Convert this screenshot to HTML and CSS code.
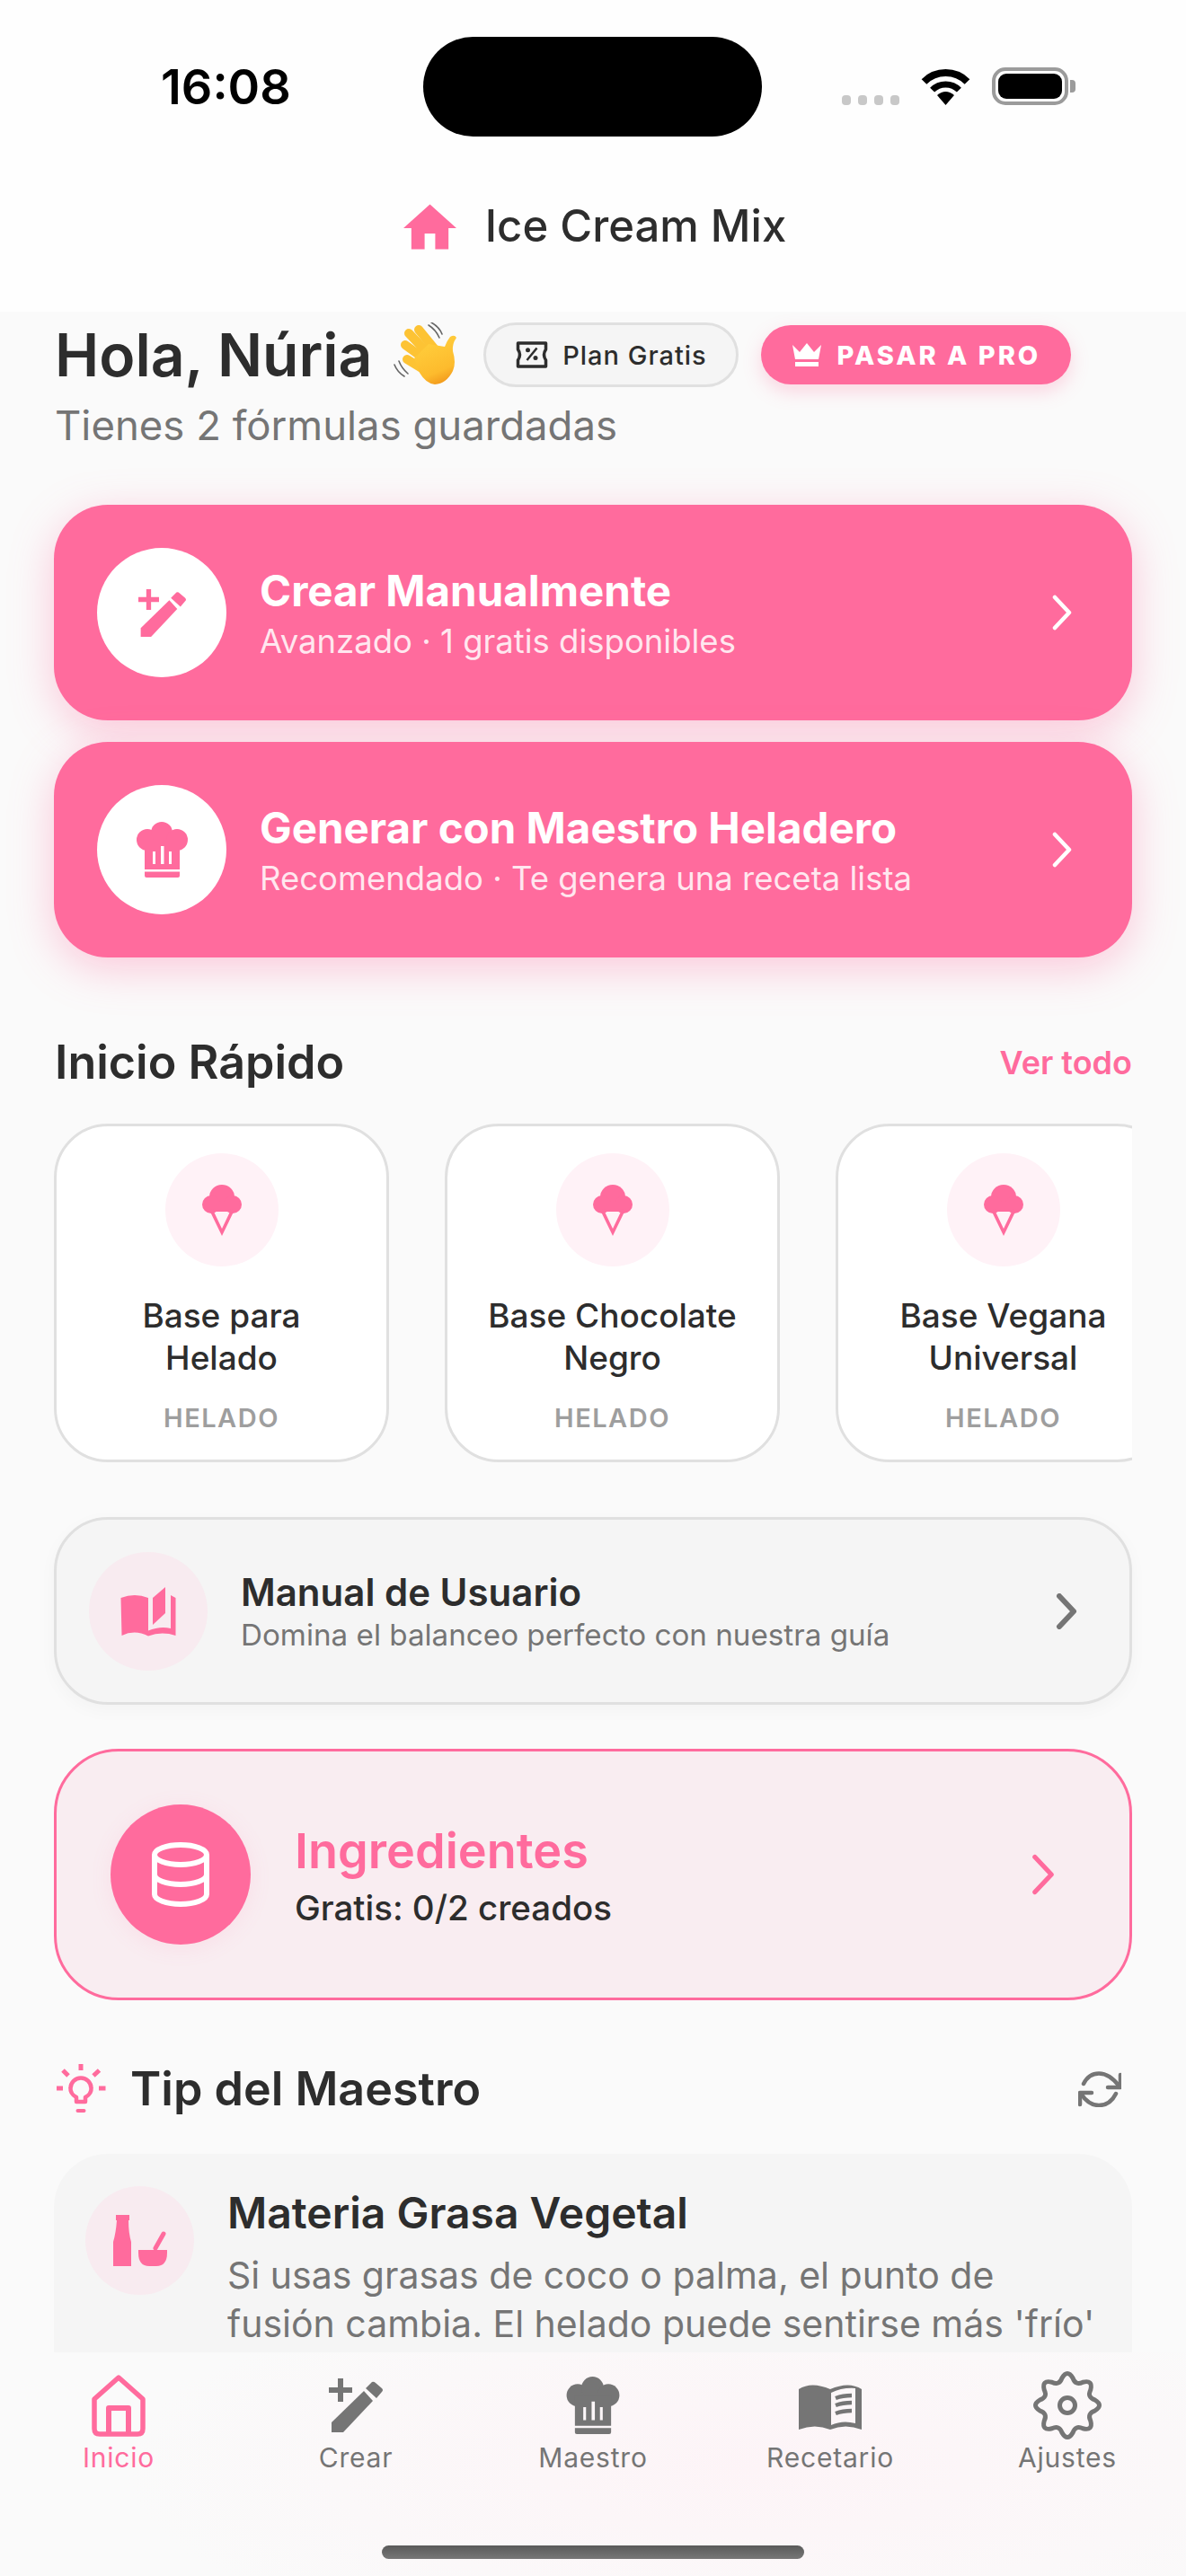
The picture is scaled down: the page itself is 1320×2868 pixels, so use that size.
FILE: index.html
```html
<!DOCTYPE html>
<html>
<head>
  <title>Ice Cream Mix</title>
  <link rel="stylesheet" href="styles.css">
</head>
<body>
  <svg class="defs" width="0" height="0">
    <defs>
      <linearGradient id="palm" x1="0.3" y1="0.2" x2="0.6" y2="1">
        <stop offset="0" stop-color="#ffcb3a"/>
        <stop offset="0.7" stop-color="#fdbb2d"/>
        <stop offset="1" stop-color="#f29a1c"/>
      </linearGradient>
    </defs>
    <symbol id="wand" viewBox="0 0 60 60">
      <path fill="currentColor" d="M10 0h6v10h10v6H16v10h-6V16H0v-6h10z"/>
      <path fill="currentColor" d="M3 49 39 14l10 11-33 35H3z"/>
      <path fill="currentColor" d="M41 11l7-7q2-1 4 1l7 6q2 2 0 4l-6 7z"/>
    </symbol>
    <symbol id="chef" viewBox="0 0 57 62">
      <circle fill="currentColor" cx="12" cy="20" r="12"/>
      <circle fill="currentColor" cx="28" cy="12" r="12"/>
      <circle fill="currentColor" cx="45" cy="20" r="12"/>
      <path fill="currentColor" fill-rule="evenodd" d="M9 20h39v33H9zM18 33v14h3V33zM27 27v20h3.500V27zM36 33v14h3V33z"/>
      <path fill="currentColor" d="M9 55.500h39V60q0 2-2 2H11q-2 0-2-2z"/>
    </symbol>
    <symbol id="cone" viewBox="0 0 44 57">
      <path fill="currentColor" fill-rule="evenodd" d="M7 26 22 57 37 26zM13 30l9 19 9-19z"/>
      <circle fill="currentColor" cx="22" cy="14" r="14"/>
      <circle fill="currentColor" cx="10" cy="22" r="10"/>
      <circle fill="currentColor" cx="34" cy="22" r="10"/>
      <path fill="currentColor" d="M10 20h24v7q-12 6-24 0z"/>
    </symbol>
    <symbol id="chevron" viewBox="0 0 24 40">
      <path fill="none" stroke="currentColor" stroke-linecap="round" stroke-linejoin="round" d="M4 3l16 17L4 37"/>
    </symbol>
  </svg>

  <div class="phone">
    <div class="top-bar">
      <div class="status-bar">
        <span class="time">16:08</span>
        <span class="island"></span>
        <div class="status-icons">
          <span class="signal"><i></i><i></i><i></i><i></i></span>
          <svg class="wifi" viewBox="0 0 59 42">
            <path fill="none" stroke="#000" stroke-width="8" d="M5.500 16A34 34 0 0 1 53.500 16"/>
            <path fill="none" stroke="#000" stroke-width="7" d="M14.600 25.100A21 21 0 0 1 44.400 25.100"/>
            <path d="M29.500 42 20 31q9.500-8 19 0z"/>
          </svg>
          <span class="battery"><span class="battery-fill"></span></span>
          <span class="battery-cap"></span>
        </div>
      </div>
      <header class="app-header">
        <svg class="logo" viewBox="2 3 20 17"><path fill="#ff6b9d" d="M10 20v-6h4v6h5v-8h3L12 3 2 12h3v8z"/></svg>
        <span class="app-title">Ice Cream Mix</span>
      </header>
    </div>

    <main class="content">
      <div class="greeting">
        <h1>Hola, Núria</h1>
        <svg class="wave" viewBox="9 10 74 72">
          <path fill="none" stroke="#666" stroke-width="1.600" stroke-linecap="round" d="M50 13q8 5 12 14M53 10q9 5 12 13M12 57q3 8 11 13M17 53q3 8 10 14"/>
          <g stroke="#fdc334" stroke-linecap="round" fill="none" stroke-width="10">
            <path d="M39 18 57 40"/>
            <path d="M28 22 49 44"/>
            <path d="M24 35 46 51"/>
            <path d="M26 51 44 62"/>
          </g>
          <path fill="url(#palm)" d="M50 34 68 37q2-6 6-11 5-3 7 1-5 7-4 15 4 13 0 22-7 14-20 15-10-1-17-13l-6-16z"/>
        </svg>
        <span class="plan-pill">
          <svg class="ticket" viewBox="13 11 35 30">
            <path fill="none" stroke="#2d2d2d" stroke-width="3.500" stroke-linejoin="round" d="M15 13H46V20Q42 26 46 32V39H15V32Q19 26 15 20Z"/>
            <path stroke="#2d2d2d" stroke-width="2.500" d="M36 18.500 25 32"/>
            <circle cx="26" cy="20.700" r="2.500" fill="#2d2d2d"/>
            <circle cx="34.500" cy="29.500" r="2.500" fill="#2d2d2d"/>
          </svg>
          Plan Gratis
        </span>
        <span class="pro-pill">
          <svg class="crown" viewBox="0 0 32 27">
            <path fill="#fff" d="M0 2l8 8 8-10 8 10 8-8-3 16H3z"/>
            <rect fill="#fff" x="3" y="21" width="26" height="5"/>
          </svg>
          PASAR A PRO
        </span>
      </div>
      <p class="saved">Tienes 2 fórmulas guardadas</p>

      <div class="action-card first">
        <span class="action-icon"><svg class="wand-icon"><use href="#wand"/></svg></span>
        <div class="action-text">
          <div class="action-title">Crear Manualmente</div>
          <div class="action-sub">Avanzado · 1 gratis disponibles</div>
        </div>
        <svg class="chevron-white"><use href="#chevron"/></svg>
      </div>
      <div class="action-card">
        <span class="action-icon"><svg class="chef-icon"><use href="#chef"/></svg></span>
        <div class="action-text">
          <div class="action-title">Generar con Maestro Heladero</div>
          <div class="action-sub">Recomendado · Te genera una receta lista</div>
        </div>
        <svg class="chevron-white"><use href="#chevron"/></svg>
      </div>

      <div class="section-head">
        <h2>Inicio Rápido</h2>
        <span class="see-all">Ver todo</span>
      </div>
      <div class="quick-row">
        <div class="quick-card">
          <span class="quick-icon"><svg class="cone-icon"><use href="#cone"/></svg></span>
          <div class="quick-title">Base para Helado</div>
          <div class="quick-tag">HELADO</div>
        </div>
        <div class="quick-card">
          <span class="quick-icon"><svg class="cone-icon"><use href="#cone"/></svg></span>
          <div class="quick-title">Base Chocolate Negro</div>
          <div class="quick-tag">HELADO</div>
        </div>
        <div class="quick-card">
          <span class="quick-icon"><svg class="cone-icon"><use href="#cone"/></svg></span>
          <div class="quick-title">Base Vegana Universal</div>
          <div class="quick-tag">HELADO</div>
        </div>
      </div>

      <div class="manual-card">
        <span class="manual-icon">
          <svg class="book-icon" viewBox="38 40 62 56">
            <path fill="#ff6b9d" d="M38.500 53Q54 47 69 53V95.500Q54 88 39.500 95Z"/>
            <path fill="#ff6b9d" d="M74 53 88 41V70L74 83Z"/>
            <path fill="#ff6b9d" d="M94 50 99.500 53V95Q84 90 69 95.500V89.500Q82 84 94 87Z"/>
          </svg>
        </span>
        <div class="manual-text">
          <div class="manual-title">Manual de Usuario</div>
          <div class="manual-sub">Domina el balanceo perfecto con nuestra guía</div>
        </div>
        <svg class="chevron-grey"><use href="#chevron"/></svg>
      </div>

      <div class="ingredients-card">
        <span class="ingredients-icon">
          <svg class="db-icon" viewBox="0 0 66 72">
            <g fill="none" stroke="#fff" stroke-width="6">
              <ellipse cx="33" cy="14" rx="29" ry="11"/>
              <path d="M4 14v44c0 6 13 11 29 11s29-5 29-11V14"/>
              <path d="M4 36c0 6 13 11 29 11s29-5 29-11"/>
            </g>
          </svg>
        </span>
        <div class="ingredients-text">
          <div class="ingredients-title">Ingredientes</div>
          <div class="ingredients-sub">Gratis: 0/2 creados</div>
        </div>
        <svg class="chevron-pink"><use href="#chevron"/></svg>
      </div>

      <div class="tip-head">
        <svg class="bulb" viewBox="12 8 56 56">
          <g fill="none" stroke="#ff6b9d">
            <path stroke-width="4.500" stroke-linejoin="round" d="M35 50V45Q28 41 28.500 35A11.500 11.500 0 1 1 51.500 35Q52 41 45 45V50Z"/>
            <path stroke-width="5" d="M40 8v7M20 15l6 6M60.500 15l-6.500 6M13 35h7M60 35h7.500"/>
            <path stroke-width="4" stroke-linecap="round" d="M36.500 60h7"/>
          </g>
        </svg>
        <h2 class="tip-heading">Tip del Maestro</h2>
        <svg class="refresh" viewBox="10 11 48 40">
          <g fill="none" stroke="#757575" stroke-width="4.500" stroke-linecap="round" stroke-linejoin="round">
            <path d="M16 25C20 17 26 13.500 33 13.500 43 13.500 50 20 56 28"/>
            <path d="M57 15V29H43"/>
            <path d="M52 36C48 44 41 49 33 49 23 49 17 42 13 36"/>
            <path d="M12 48V35H25"/>
          </g>
        </svg>
      </div>
      <div class="tip-card">
        <span class="tip-icon">
          <svg class="mortar" viewBox="0 0 60 57">
            <path fill="#ff6b9d" d="M3 0h15v6h-1q0 14 3 24v27H0V30q3-10 4-24H3z"/>
            <path fill="#ff6b9d" d="M28 39h32v3q0 15-12 15h-8q-12 0-12-15z"/>
            <path fill="none" stroke="#ff6b9d" stroke-width="5" stroke-linecap="round" d="M47 37l9-16"/>
          </svg>
        </span>
        <div class="tip-text">
          <div class="tip-title">Materia Grasa Vegetal</div>
          <p class="tip-body">Si usas grasas de coco o palma, el punto de<br>fusión cambia. El helado puede sentirse más 'frío'</p>
        </div>
      </div>
    </main>

    <nav class="tab-bar">
      <div class="tabs">
        <div class="tab active">
          <span class="tab-icon">
            <svg class="tab-home" viewBox="0 0 62 69">
              <g fill="none" stroke="currentColor" stroke-linejoin="round">
                <path stroke-width="5.500" d="M4 27 31 3l27 24v33q0 6-6 6H10q-6 0-6-6z"/>
                <path stroke-width="6" d="M20 66V37h22v29"/>
              </g>
            </svg>
          </span>
          <span class="tab-label">Inicio</span>
        </div>
        <div class="tab">
          <span class="tab-icon"><svg class="tab-wand"><use href="#wand"/></svg></span>
          <span class="tab-label">Crear</span>
        </div>
        <div class="tab">
          <span class="tab-icon"><svg class="tab-chef"><use href="#chef"/></svg></span>
          <span class="tab-label">Maestro</span>
        </div>
        <div class="tab">
          <span class="tab-icon">
            <svg class="tab-book" viewBox="0 0 70 53">
              <path fill="currentColor" fill-rule="evenodd" d="M0 8q14-9 35 0 21-9 35 0v45q-18-7-35 0-17-7-35 0zM36 12v36q13-6 27-2V7q-15-1-27 5z"/>
              <path fill="none" stroke="currentColor" stroke-width="4.500" d="M41 18q8-3 18-3M41 26q8-3 18-3M41 35q8-3 18-3"/>
            </svg>
          </span>
          <span class="tab-label">Recetario</span>
        </div>
        <div class="tab">
          <span class="tab-icon">
            <svg class="tab-gear" viewBox="0 0 80 80">
              <g fill="none" stroke="currentColor" stroke-width="5" stroke-linejoin="round">
                <path d="M33.950 9.600Q40-.6 46.050 9.600 49.030 18.200 57.220 14.220 68.700 11.300 65.780 22.780 61.800 30.970 70.400 33.950 80.600 40 70.400 46.050 61.800 49.030 65.780 57.220 68.700 68.700 57.220 65.780 49.030 61.800 46.050 70.400 40 80.600 33.950 70.400 30.970 61.800 22.780 65.780 11.300 68.700 14.220 57.220 18.200 49.030 9.600 46.050-.6 40 9.600 33.950 18.200 30.970 14.220 22.780 11.300 11.300 22.780 14.220 30.970 18.200 33.950 9.600z"/>
                <circle cx="40" cy="40" r="8.500"/>
              </g>
            </svg>
          </span>
          <span class="tab-label">Ajustes</span>
        </div>
      </div>
      <span class="home-bar"></span>
    </nav>
  </div>
</body>
</html>
```

FILE: styles.css
```css
body {
  margin: 0;
  font-family: "Inter", "Liberation Sans", sans-serif;
  background-color: #fafafa;
  color: #2d2d2d;
}

h1, h2, p {
  margin: 0;
}

.defs {
  position: absolute;
}

.phone {
  width: 1320px;
  height: 2868px;
  display: flex;
  flex-direction: column;
  overflow: hidden;
  background-color: #fafafa;
}

/* status bar + app title */
.top-bar {
  height: 347px;
  flex-shrink: 0;
  background-color: #fefefe;
}

.status-bar {
  height: 193px;
  display: flex;
  align-items: flex-start;
  padding-left: 179px;
}

.time {
  margin-top: 64px;
  font-size: 54px;
  line-height: 66px;
  font-weight: 600;
  color: #000;
  width: 292px;
}

.island {
  margin-top: 41px;
  width: 377px;
  height: 111px;
  border-radius: 56px;
  background-color: #000;
}

.status-icons {
  margin-top: 75px;
  margin-left: 89px;
  height: 42px;
  display: flex;
  align-items: flex-end;
}

.signal {
  display: flex;
  gap: 8px;
  margin-right: 22px;
}

.signal i {
  width: 10px;
  height: 11px;
  border-radius: 4px;
  background-color: #c8c8c8;
}

.wifi {
  width: 59px;
  height: 42px;
  margin-right: 22px;
}

.battery {
  box-sizing: border-box;
  width: 85px;
  height: 42px;
  border: 4px solid #9b9b9b;
  border-radius: 15px;
  padding: 3px;
}

.battery-fill {
  display: block;
  height: 100%;
  background-color: #000;
  border-radius: 9px;
}

.battery-cap {
  width: 6px;
  height: 14px;
  margin: 0 0 14px 2px;
  border-radius: 0 4px 4px 0;
  background-color: #9b9b9b;
}

.app-header {
  display: flex;
  justify-content: center;
  align-items: center;
  gap: 32px;
  margin-top: 27px;
  padding-left: 4px;
}

.logo {
  width: 59px;
  height: 51px;
}

.app-title {
  font-size: 49px;
  line-height: 64px;
  font-weight: 500;
  color: #2d2d2d;
}

/* scrolling part */
.content {
  flex: 1;
  min-height: 0;
  overflow: hidden;
  padding: 12px 60px 0;
}

.greeting {
  display: flex;
  align-items: center;
  height: 72px;
}

.greeting h1 {
  font-size: 66px;
  line-height: 72px;
  font-weight: 600;
  margin-left: 1px;
}

.wave {
  width: 74px;
  height: 72px;
  margin: 0 28px 0 22px;
}

.plan-pill {
  box-sizing: border-box;
  width: 284px;
  height: 72px;
  display: flex;
  align-items: center;
  justify-content: center;
  gap: 16px;
  border: 3px solid #e0e0e0;
  border-radius: 36px;
  background-color: #f5f5f5;
  font-size: 29px;
  font-weight: 500;
  letter-spacing: 1px;
}

.ticket {
  width: 36px;
  height: 30px;
}

.pro-pill {
  box-sizing: border-box;
  width: 345px;
  height: 66px;
  margin-left: 25px;
  display: flex;
  align-items: center;
  justify-content: center;
  gap: 18px;
  border-radius: 33px;
  background-color: #ff6b9d;
  box-shadow: 0 8px 20px rgba(255, 107, 157, 0.25);
  color: #fff;
  font-size: 29px;
  font-weight: 800;
  letter-spacing: 3px;
}

.crown {
  width: 32px;
  height: 27px;
}

.saved {
  margin: 16px 0 0 1px;
  font-size: 45.500px;
  line-height: 54px;
  color: #757575;
}

.action-card {
  height: 240px;
  margin-top: 24px;
  padding: 0 66px 0 48px;
  display: flex;
  align-items: center;
  border-radius: 60px;
  background-color: #ff6b9d;
  box-shadow: 0 12px 48px rgba(255, 107, 157, 0.35);
  color: #fff;
}

.action-card.first {
  margin-top: 61px;
}

.action-icon {
  width: 144px;
  height: 144px;
  flex-shrink: 0;
  border-radius: 50%;
  background-color: #fff;
  color: #ff6b9d;
  display: flex;
  align-items: center;
  justify-content: center;
}

.wand-icon {
  width: 53px;
  height: 53px;
}

.chef-icon {
  width: 57px;
  height: 62px;
}

.action-text {
  flex: 1;
  margin-left: 37px;
}

.action-title {
  font-size: 47.500px;
  line-height: 60px;
  font-weight: 700;
}

.action-sub {
  margin-top: 3px;
  font-size: 36.500px;
  line-height: 46px;
  color: rgba(255, 255, 255, 0.85);
}

.chevron-white {
  width: 24px;
  height: 40px;
  color: #fff;
  stroke-width: 4.500;
}

.section-head {
  height: 60px;
  margin-top: 87px;
  display: flex;
  align-items: center;
  justify-content: space-between;
}

.section-head h2 {
  font-size: 52px;
  line-height: 60px;
  font-weight: 600;
  margin-left: 1px;
}

.see-all {
  font-size: 36px;
  font-weight: 600;
  color: #ff6b9d;
}

.quick-row {
  margin-top: 38px;
  display: flex;
  gap: 62px;
  overflow: hidden;
}

.quick-card {
  box-sizing: border-box;
  width: 373px;
  height: 377px;
  flex-shrink: 0;
  padding: 30px 36px 0;
  border: 3px solid #e0e0e0;
  border-radius: 60px;
  background-color: #fff;
  text-align: center;
}

.quick-icon {
  width: 126px;
  height: 126px;
  margin: 0 auto;
  border-radius: 50%;
  background-color: #fff2f7;
  color: #ff6b9d;
  display: flex;
  align-items: center;
  justify-content: center;
}

.cone-icon {
  width: 44px;
  height: 57px;
}

.quick-title {
  margin-top: 31px;
  font-size: 37px;
  line-height: 47px;
  font-weight: 500;
}

.quick-tag {
  margin-top: 26px;
  font-size: 29px;
  line-height: 36px;
  font-weight: 600;
  letter-spacing: 1.500px;
  color: #9e9e9e;
}

.manual-card {
  box-sizing: border-box;
  height: 209px;
  margin-top: 61px;
  padding: 0 58px 0 36px;
  display: flex;
  align-items: center;
  border: 3px solid #e0e0e0;
  border-radius: 60px;
  background-color: #f5f5f5;
  box-shadow: 0 6px 20px rgba(0, 0, 0, 0.03);
}

.manual-icon {
  width: 132px;
  height: 132px;
  flex-shrink: 0;
  border-radius: 50%;
  background-color: #f8ebf0;
  display: flex;
  align-items: center;
  justify-content: center;
}

.book-icon {
  width: 62px;
  height: 56px;
}

.manual-text {
  flex: 1;
  margin-left: 37px;
}

.manual-title {
  font-size: 42px;
  line-height: 52px;
  font-weight: 600;
}

.manual-sub {
  font-size: 33.200px;
  line-height: 42px;
  color: #757575;
}

.chevron-grey {
  width: 24px;
  height: 40px;
  color: #757575;
  stroke-width: 6;
}

.ingredients-card {
  box-sizing: border-box;
  height: 280px;
  margin-top: 49px;
  padding: 0 82px 0 60px;
  display: flex;
  align-items: center;
  border: 3px solid #ff6b9d;
  border-radius: 72px;
  background-color: #f9edf1;
}

.ingredients-icon {
  width: 156px;
  height: 156px;
  flex-shrink: 0;
  border-radius: 50%;
  background-color: #ff6b9d;
  box-shadow: 0 4px 24px rgba(255, 107, 157, 0.1);
  display: flex;
  align-items: center;
  justify-content: center;
}

.db-icon {
  width: 66px;
  height: 72px;
}

.ingredients-text {
  flex: 1;
  margin-left: 49px;
  padding-top: 2px;
}

.ingredients-title {
  font-size: 54px;
  line-height: 66px;
  font-weight: 600;
  color: #ff6b9d;
}

.ingredients-sub {
  margin-top: 6px;
  font-size: 38.500px;
  line-height: 48px;
  font-weight: 500;
}

.chevron-pink {
  width: 28px;
  height: 46px;
  color: #ff6b9d;
  stroke-width: 4.500;
}

.tip-head {
  height: 60px;
  margin-top: 69px;
  display: flex;
  align-items: center;
  padding-right: 12px;
}

.bulb {
  width: 56px;
  height: 56px;
  margin-left: 2px;
}

.tip-heading {
  flex: 1;
  margin-left: 27px;
  font-size: 52px;
  line-height: 60px;
  font-weight: 600;
}

.refresh {
  width: 48px;
  height: 40px;
}

.tip-card {
  margin-top: 42px;
  padding: 36px 20px 60px 35px;
  display: flex;
  align-items: flex-start;
  border-radius: 60px;
  background-color: #f5f5f5;
}

.tip-icon {
  width: 121px;
  height: 121px;
  flex-shrink: 0;
  border-radius: 50%;
  background-color: #f8ebf0;
  display: flex;
  align-items: center;
  justify-content: center;
}

.mortar {
  width: 60px;
  height: 57px;
}

.tip-text {
  margin-left: 37px;
}

.tip-title {
  font-size: 48px;
  line-height: 60px;
  font-weight: 600;
}

.tip-body {
  margin-top: 12px;
  font-size: 41px;
  line-height: 54px;
  color: #757575;
}

/* bottom tabs */
.tab-bar {
  height: 249px;
  flex-shrink: 0;
  display: flex;
  flex-direction: column;
  align-items: center;
  background: radial-gradient(ellipse 700px 220px at 840px 130px, #fdf4f7, #fafafa);
}

.tabs {
  width: 100%;
  display: flex;
}

.tab {
  width: 264px;
  display: flex;
  flex-direction: column;
  align-items: center;
  color: #757575;
}

.tab.active {
  color: #ff6b9d;
}

.tab-icon {
  height: 96px;
  margin-top: 11px;
  display: flex;
  align-items: center;
  justify-content: center;
}

.tab-home {
  width: 62px;
  height: 69px;
}

.tab-wand {
  width: 60px;
  height: 60px;
}

.tab-chef {
  width: 60px;
  height: 64px;
}

.tab-book {
  width: 70px;
  height: 53px;
}

.tab-gear {
  width: 80px;
  height: 80px;
}

.tab-label {
  margin-top: -8px;
  font-size: 30px;
  line-height: 36px;
  font-weight: 400;
  letter-spacing: 0.800px;
}

.home-bar {
  width: 470px;
  height: 15px;
  margin-top: 80px;
  border-radius: 8px;
  background: linear-gradient(#5a5a5a, #777);
}
```
